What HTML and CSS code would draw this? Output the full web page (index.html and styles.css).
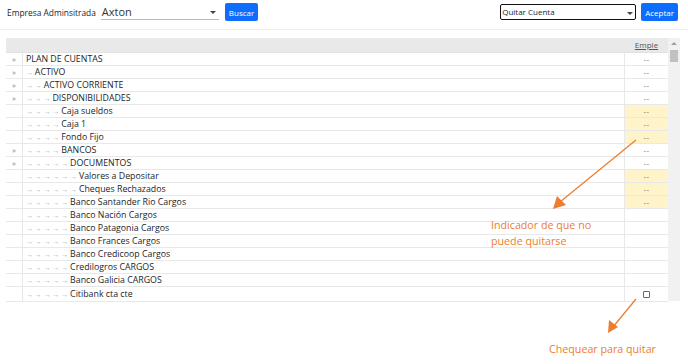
FILE: index.html
```html
<!DOCTYPE html>
<html lang="es">
<head>
    <meta charset="UTF-8">
    <title>Plan de cuentas</title>
    <link rel="stylesheet" href="styles.css">
</head>
<body>
    <div class="topbar">
        <div class="filter">
            <span class="lbl">Empresa Adminsitrada</span>
            <div class="combo">Axton<span class="caret"></span></div>
            <button class="btn">Buscar</button>
        </div>
        <div class="filter">
            <div class="select-box">Quitar Cuenta<span class="caret small"></span></div>
            <button class="btn">Aceptar</button>
        </div>
    </div>

    <div class="grid">
        <div class="tbl">
            <div class="row head"><div class="c-exp"></div><div class="c-name"></div><div class="c-emp"><u>Emple</u></div></div>
            <div class="row"><div class="c-exp">»</div><div class="c-name">PLAN DE CUENTAS</div><div class="c-emp">--</div></div>
            <div class="row"><div class="c-exp">»</div><div class="c-name"><i>→ </i>ACTIVO</div><div class="c-emp">--</div></div>
            <div class="row"><div class="c-exp">»</div><div class="c-name"><i>→ → </i>ACTIVO CORRIENTE</div><div class="c-emp">--</div></div>
            <div class="row"><div class="c-exp">»</div><div class="c-name"><i>→ → → </i>DISPONIBILIDADES</div><div class="c-emp">--</div></div>
            <div class="row"><div class="c-exp"></div><div class="c-name"><i>→ → → → </i>Caja sueldos</div><div class="c-emp warn">--</div></div>
            <div class="row"><div class="c-exp"></div><div class="c-name"><i>→ → → → </i>Caja 1</div><div class="c-emp warn">--</div></div>
            <div class="row"><div class="c-exp"></div><div class="c-name"><i>→ → → → </i>Fondo Fijo</div><div class="c-emp warn">--</div></div>
            <div class="row"><div class="c-exp">»</div><div class="c-name"><i>→ → → → </i>BANCOS</div><div class="c-emp">--</div></div>
            <div class="row"><div class="c-exp">»</div><div class="c-name"><i>→ → → → → </i>DOCUMENTOS</div><div class="c-emp">--</div></div>
            <div class="row"><div class="c-exp"></div><div class="c-name"><i>→ → → → → → </i>Valores a Depositar</div><div class="c-emp warn">--</div></div>
            <div class="row"><div class="c-exp"></div><div class="c-name"><i>→ → → → → → </i>Cheques Rechazados</div><div class="c-emp warn">--</div></div>
            <div class="row"><div class="c-exp"></div><div class="c-name"><i>→ → → → → </i>Banco Santander Rio Cargos</div><div class="c-emp warn">--</div></div>
            <div class="row"><div class="c-exp"></div><div class="c-name"><i>→ → → → → </i>Banco Nación Cargos</div><div class="c-emp"></div></div>
            <div class="row"><div class="c-exp"></div><div class="c-name"><i>→ → → → → </i>Banco Patagonia Cargos</div><div class="c-emp"></div></div>
            <div class="row"><div class="c-exp"></div><div class="c-name"><i>→ → → → → </i>Banco Frances Cargos</div><div class="c-emp"></div></div>
            <div class="row"><div class="c-exp"></div><div class="c-name"><i>→ → → → → </i>Banco Credicoop Cargos</div><div class="c-emp"></div></div>
            <div class="row"><div class="c-exp"></div><div class="c-name"><i>→ → → → → </i>Credilogros CARGOS</div><div class="c-emp"></div></div>
            <div class="row"><div class="c-exp"></div><div class="c-name"><i>→ → → → → </i>Banco Galicia CARGOS</div><div class="c-emp"></div></div>
            <div class="row tall"><div class="c-exp"></div><div class="c-name"><i>→ → → → → </i>Citibank cta cte</div><div class="c-emp"><span class="chk"></span></div></div>
        </div>
        <div class="scrollbar">
            <span class="up"></span>
            <span class="thumb"></span>
        </div>
    </div>

    <!-- anotaciones -->
    <svg class="notes" width="688" height="364" viewBox="0 0 688 364">
        <g stroke="#ed7d31" stroke-width="1.3" fill="#ed7d31">
            <line x1="636" y1="140" x2="560" y2="202"/>
            <polygon points="553,209 557,196 566,205" stroke="none"/>
            <line x1="636" y1="299" x2="613" y2="327"/>
            <polygon points="608,333 609,320 618,327" stroke="none"/>
        </g>
    </svg>
    <div class="note note-1">Indicador de que no<br>puede quitarse</div>
    <div class="note note-2">Chequear para quitar</div>
</body>
</html>
```

FILE: styles.css
```css
body {
    margin: 0;
    font-family: "Open Sans", "Noto Sans", sans-serif;
    color: #212529;
    background: #fff;
    position: relative;
    width: 688px;
    height: 364px;
    overflow: hidden;
}
.topbar {
    display: flex;
    justify-content: space-between;
    align-items: center;
    padding: 3px 10px 8px 7px;
    border-bottom: 1px solid #eeeeee;
}
.filter {
    display: flex;
    align-items: center;
}
.lbl {
    font-size: 8.4px;
    margin-right: 5px;
}
.combo {
    position: relative;
    width: 117px;
    height: 14px;
    font-size: 11px;
    line-height: 14px;
    color: #333;
    border-bottom: 1px solid #bbb;
    padding-left: 1px;
    margin-right: 6px;
}
.caret {
    position: absolute;
    right: 3px;
    top: 6px;
    border-left: 3px solid transparent;
    border-right: 3px solid transparent;
    border-top: 3px solid #444;
}
.caret.small {
    right: 2px;
    top: 7px;
}
.btn {
    height: 18px;
    padding: 0 4px;
    border: none;
    border-radius: 2px;
    background: #0d6efd;
    color: #fff;
    font-family: inherit;
    font-size: 8px;
}
.select-box {
    position: relative;
    width: 133px;
    height: 14px;
    border: 1px solid #111;
    border-radius: 2px;
    font-size: 8px;
    line-height: 14px;
    padding-left: 1px;
    margin-right: 5px;
}
.grid {
    display: flex;
    margin: 8px 8px 0 6px;
}
.tbl {
    width: 662px;
}
.row {
    display: flex;
    height: 12px;
    border-bottom: 1px solid #e8e8e8;
    font-size: 8.8px;
    line-height: 12px;
}
.row.head {
    height: 14px;
    background: #e9e9e9;
    border-bottom: 1px solid #e2e2e2;
    line-height: 14px;
}
.row.tall {
    height: 14px;
    line-height: 14px;
}
.c-exp {
    width: 16px;
    border-right: 1px solid #e8e8e8;
    text-align: center;
    color: #888;
    font-size: 8px;
}
.c-name {
    flex: 1;
    padding-left: 3px;
    white-space: nowrap;
}
.c-name i {
    font-style: normal;
    color: #aaa;
    font-size: 7px;
}
.c-emp {
    width: 43px;
    border-left: 1px solid #e8e8e8;
    text-align: center;
    color: #777;
    font-size: 8px;
    letter-spacing: 0.5px;
}
.head .c-exp,
.head .c-emp {
    border-color: transparent;
}
.head .c-emp {
    color: #555;
    font-size: 8px;
    letter-spacing: 0;
}
.c-emp.warn {
    background: #fff3c9;
}
.chk {
    display: inline-block;
    width: 5px;
    height: 5px;
    border: 1px solid #666;
    border-radius: 1px;
    vertical-align: middle;
}
.scrollbar {
    position: relative;
    width: 12px;
    height: 263px;
    background: #f1f1f1;
}
.up {
    position: absolute;
    left: 3px;
    top: 4px;
    border-left: 3px solid transparent;
    border-right: 3px solid transparent;
    border-bottom: 3px solid #a0a0a0;
}
.thumb {
    position: absolute;
    left: 2px;
    top: 12px;
    width: 8px;
    height: 12px;
    background: #c1c1c1;
}
.notes {
    position: absolute;
    left: 0;
    top: 0;
    pointer-events: none;
}
.note {
    position: absolute;
    color: #ed7d31;
    font-size: 10.7px;
    line-height: 16px;
}
.note-1 {
    left: 491px;
    top: 217px;
}
.note-2 {
    left: 549px;
    top: 341px;
}
```
